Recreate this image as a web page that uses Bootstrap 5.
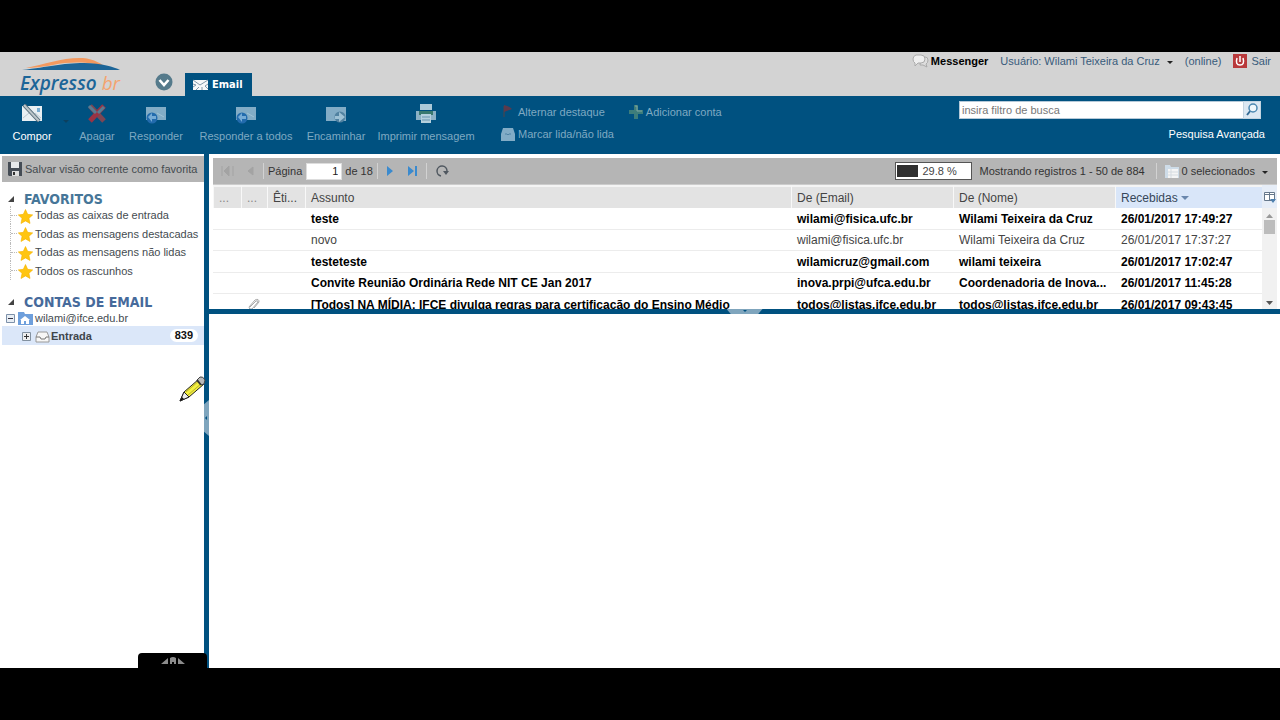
<!DOCTYPE html>
<html lang="pt-BR">
<head>
<meta charset="utf-8">
<meta name="viewport" content="width=device-width, initial-scale=1">
<title>Expresso br - Email</title>
<link href="https://cdn.jsdelivr.net/npm/bootstrap@5.3.0/dist/css/bootstrap.min.css" rel="stylesheet">
<style>
  :root { --navy: #005180; --ink: #444b50; --soft: #7fa9c2; }
  body { background: #000; font: 11px/16px "Liberation Sans", Arial, sans-serif; color: var(--ink); }
  button, .linkish { background: none; border: 0; padding: 0; color: inherit; font: inherit; text-decoration: none; }
  svg { display: block; flex: none; }
  .frame { height: 100vh; padding: 52px 0; }
  .app { background: #fff; }

  .masthead { background: #d3d3d3; height: 44px; }
  .brand { width: 102px; margin-left: 20px; color: #1c6598; font: italic 600 19px/24px "Open Sans", sans-serif; white-space: nowrap; padding-top: 5px; }
  .brand svg { margin-left: 2px; }
  .brand em { color: #f3a46f; font-weight: 400; }
  .tab-more { margin: 21px 12px 0 33px; align-self: flex-start; }
  .tab-mail { background: var(--navy); color: #fff; height: 23px; width: 67px; padding-left: 8px; font: bold 11px/16px "DejaVu Sans Condensed", sans-serif; }
  .session { color: #385b7b; height: 18px; padding-right: 9px; gap: 12px; }
  .caret-s { width: 0; height: 0; border: 3px solid transparent; border-top-color: #222; border-bottom: 0; display: inline-block; vertical-align: middle; }

  .actions { background: var(--navy); color: var(--soft); height: 58px; padding: 8px 15px 0 12px; gap: 12px; }
  .act { display: flex; flex-direction: column; align-items: center; gap: 4px; white-space: nowrap; }
  .act svg { height: 20px; }
  .w-xs { width: 36px; } .w-sm { width: 40px; } .w-md { width: 58px; } .w-lg { width: 98px; }
  .more { width: 3px; height: 34px; opacity: .35; }
  .minis { gap: 6px; padding-left: 14px; }
  .minis button { display: flex; align-items: center; gap: 3px; white-space: nowrap; }
  .mini-row { gap: 24px; }
  .search { width: 302px; height: 18px; margin-top: -3px; }
  .search input { border: 1px solid #b5c9d8; border-right: 0; min-width: 0; padding: 0 2px; font: inherit; background: #fff; color: #666; }
  .search input::placeholder { color: #777; }
  .search button { width: 18px; background: #dce8f2; border: 1px solid #c3d4e0; }
  .advanced { margin-top: 7px; }

  .side { width: 204px; flex: none; overflow: hidden; padding-top: 2px; }
  .save { background: #b5b5b5; margin-left: 2px; height: 26px; padding-left: 6px; white-space: nowrap; width: 202px; overflow: hidden; }
  .side h2 { font: bold 14px/18px "DejaVu Sans Condensed", sans-serif; color: #467698; margin: 0; padding-left: 8px; display: flex; align-items: center; gap: 10px; white-space: nowrap; }
  .side h2.acc { color: #466a9b; margin-top: 14px; line-height: 16px; }
  .tri { width: 0; height: 0; border-left: 6px solid transparent; border-bottom: 6px solid #444; }
  .favs { margin: -2px 0 0 10px; padding: 0; list-style: none; }
  .favs li { border-left: 1px dotted #bbb; white-space: nowrap; height: 18px; display: flex; align-items: center; }
  .favs li::before { content: ""; width: 6px; border-top: 1px dotted #bbb; margin-right: 1px; }
  .favs svg { margin: 2px 2px 0 0; }
  .favs li:nth-child(even) { height: 19px; }
  .inbox { background: #dbe7f9; margin-left: 2px; height: 19px; padding: 0 6px 0 19px; font-weight: bold; color: #3e454c; }
  .count { background: #fff; color: #111; border-radius: 8px; padding: 0 5px; line-height: 13px; }
  .vsplit { width: 5px; flex: none; background: var(--navy); padding-top: 246px; }
  .grip-v { background: #7fa5bd; width: 5px; height: 36px; clip-path: polygon(100% 0, 100% 100%, 0 88%, 0 12%); padding: 16px 1px; }
  .grip-v i { display: block; width: 0; border: 2px solid transparent; border-right-color: var(--navy); border-left: 0; }

  .grid-pane { height: 155px; padding: 4px 3px 0 4px; overflow: hidden; }
  .pager { background: #b5b5b5; height: 27px; padding: 0 9px 0 8px; color: #333; white-space: nowrap; border-bottom: 1px solid #ccc; }
  .pager input { width: 36px; height: 17px; border: 1px solid #ddd; text-align: right; padding: 0 3px; font: inherit; color: #222; margin: 0 3px 0 4px; }
  .rule { width: 1px; height: 16px; background: #d2d2d2; }
  .quota { width: 77px; height: 18px; background: #fff; border: 1px solid #555; padding: 1px; line-height: 14px; color: #444; margin-right: 8px; }
  .quota i { width: 30%; background: #2f2f2f; height: 12px; }
  .shown { min-width: 172px; }
  .mails { table-layout: fixed; width: 100%; border-collapse: separate; border-spacing: 0; color: #000; font-size: 12px; }
  .mails th { font-weight: 400; color: #444; background: #e3e3e3; height: 23px; padding: 0 5px; border-left: 1px solid #f8f8f8; border-top: 2px solid #f4f4f4; }
  .mails th.dim { color: #888; }
  .mails td { padding: 0 6px; }
  .mails th, .mails td { overflow: hidden; text-overflow: ellipsis; white-space: nowrap; }
  .mails th.sorted { background: #d9e6f9; color: #37475a; }
  .mails .caret-s { border-width: 4px 4px 0; border-top-color: #6a87ad; }
  .mails td { height: 22px; border-bottom: 1px solid #ececec; font-weight: bold; }
  .mails tbody tr:nth-child(even) td { height: 21px; }
  .mails tr.seen td { font-weight: 400; color: #444; }
  .c-flag { width: 28px; } .c-clip { width: 26px; } .c-tag { width: 38px; } .c-who { width: 162px; } .c-date { width: 147px; }
  .rail { width: 15px; flex: none; }
  .cols { height: 23px; background: #e6edf7; }
  .bar { background: #f1f1f1; padding: 6px 2px 3px; }
  .bar b { width: 11px; height: 14px; background: #bcbcbc; margin-bottom: auto; margin-top: 2px; }
  .hsplit { height: 5px; background: var(--navy); }
  .grip-h { background: #7fa5bd; width: 36px; height: 5px; clip-path: polygon(0 0, 100% 0, 88% 100%, 12% 100%); padding-top: 1px; }
  .grip-h i { display: block; width: 4px; margin: auto; border: 2px solid transparent; border-top-color: var(--navy); border-bottom: 0; }
  .dock { position: absolute; left: 138px; bottom: 0; width: 69px; height: 15px; background: #000; border-radius: 4px 4px 0 0; }
  .pencil { position: absolute; left: 179px; top: 323px; }
</style>
</head>
<body>
<svg width="0" height="0" class="position-absolute" aria-hidden="true">
  <symbol id="star" viewBox="0 0 14 14"><path d="M7 .5 9 5l4.700.500-3.500 3.200 1 4.800L7 11.100l-4.200 2.400 1-4.800L.300 5.500 5 5z" fill="#ffc511" stroke="#f5b400" stroke-width=".6"/></symbol>
</svg>
<div class="frame">
<div class="app h-100 d-flex flex-column position-relative overflow-hidden">

  <header class="masthead d-flex">
    <div class="brand">
      <svg width="98" height="14" viewBox="0 0 98 14"><path d="M4 11C23 7 42 0 61 1c11 1 19 6 24 10C72 5 51 4 31 8 20 10 12 11 4 11z" fill="#f3995f"/><path d="M0 13c27-3 39-7 62-7 18 0 30 4 36 7z" fill="#1c6598"/></svg>
      <div>Expresso <em>br</em></div>
    </div>
    <button class="tab-more" aria-label="Mais"><svg width="18" height="18" viewBox="0 0 18 18"><circle cx="9" cy="9" r="8.500" fill="#557a8b"/><path d="m4.500 7 4.500 5 4.500-5" fill="none" stroke="#fff" stroke-width="2.600"/></svg></button>
    <button class="tab-mail align-self-end d-flex align-items-center gap-1"><svg width="15" height="11" viewBox="0 0 15 11"><path d="M0 1h15v10H0z" fill="#f5f7f8"/><path d="m0 1 7 5 8-5M0 5l3 1-3 2M3 11l3-3M15 5l-3 2 3 3M9 11V8" fill="none" stroke="#8097a8"/></svg>Email</button>
    <div class="session ms-auto d-flex align-items-center">
      <button class="d-flex align-items-center fw-bold text-black"><svg width="19" height="14" viewBox="0 0 19 14"><path d="M9 3h4q3 0 3 3t-2 4l1 3-4-2H8z" fill="#ddd" stroke="#aaa"/><path d="M4 1h5q4 0 4 4T9 9H6l-3 3V9Q1 8 1 5t3-4z" fill="#eee" stroke="#aaa"/></svg>Messenger</button>
      <button>Usuário: Wilami Teixeira da Cruz <span class="caret-s ms-1"></span></button>
      <span>(online)</span>
      <a href="#" class="linkish d-flex align-items-center gap-1"><svg width="14" height="14" viewBox="1 0 14 14"><path d="M1 0h14v14H1z" fill="#b9393b"/><path d="M5 4Q3 11 8 11t3-7M8 2v6" fill="none" stroke="#fff" stroke-width="1.500"/></svg>Sair</a>
    </div>
  </header>

  <nav class="actions d-flex align-items-start">
    <button class="act w-sm text-white"><svg width="24" viewBox="0 0 24 20"><path d="M2 2h20v15H2z" fill="#e9f0f3"/><path d="m3 14 6-5m6 0 6 5" stroke="#bccad2"/><path d="M17 4h3v4h-3z" fill="#7aaed2"/><path d="m4 1 15 16" stroke="#526b78" stroke-width="4"/><path d="m4 1 15 16" stroke="#bcc5c9" stroke-width="2"/></svg>Compor</button>
    <span class="more d-flex align-items-center justify-content-center"><span class="caret-s flex-shrink-0"></span></span>
    <button class="act w-xs"><svg width="20" viewBox="0 0 20 20"><path d="m3 2 14 15" stroke="#7d4654" stroke-width="5"/><path d="M17 2 3 17" stroke="#993344" stroke-width="5"/><path d="m2 2 7 7m8-6-6 6" stroke="#597b91" stroke-width="3"/></svg>Apagar</button>
    <button class="act w-md"><svg width="22" viewBox="0 0 22 20"><path d="M1 3h20v13H1z" fill="#82acc6"/><path d="m12 9 7 4" stroke="#a0c3d6"/><circle cx="7" cy="14" r="5.500" fill="#226bad"/><path d="M3 13 7 9v3h4v3H7v3z" fill="#75abd6"/></svg>Responder</button>
    <button class="act w-lg"><svg width="22" viewBox="0 0 22 20"><path d="M1 3h20v13H1z" fill="#82acc6"/><path d="m12 9 7 4" stroke="#a0c3d6"/><circle cx="7" cy="14" r="5.500" fill="#226bad"/><path d="M3 13 7 9v3h4v3H7v3z" fill="#75abd6"/></svg>Responder a todos</button>
    <button class="act w-md"><svg width="22" viewBox="0 0 22 20"><path d="M1 3h20v14H1z" fill="#82acc6"/><circle cx="15" cy="13" r="5.500" fill="#5182a1"/><path d="M10 12h4V8l6 5-6 5v-3h-4z" fill="#9dc1d5"/></svg>Encaminhar</button>
    <button class="act w-lg"><svg width="22" viewBox="0 0 22 20"><path d="M5 0h12v6H5z" fill="#abc9d8"/><path d="M1 7h20v9H1z" fill="#8bb1c6"/><path d="M4 7h14v4H4z" fill="#39796f"/><path d="M6 10h10v9H6z" fill="#b5d0dd"/><path d="M7 13h8m-8 3h8" stroke="#6895af"/></svg>Imprimir mensagem</button>
    <div class="minis d-flex flex-column">
      <div class="mini-row d-flex">
        <button><svg width="14" height="14" viewBox="0 0 14 14"><path d="M3 1v11" stroke="#37485a" stroke-width="1.500"/><path d="M3 0q5 1 8 4-3 1-8 3z" fill="#5c3a4c"/></svg>Alternar destaque</button>
        <button><svg width="14" height="14" viewBox="1 0 14 14"><path d="M6 0h4v5h5v4h-5v5H6V9H1V5h5z" fill="#3d7d7b"/><path d="M7 1h2v5h5" stroke="#80a7a0" fill="none"/></svg>Adicionar conta</button>
      </div>
      <button><svg width="14" height="14" viewBox="1 0 14 14"><path d="M3 1h10l2 6v7H1V7z" fill="#82acc6"/><path d="M5 7h2l1 1 1-1h2" fill="none" stroke="#4f83a5"/></svg>Marcar lida/não lida</button>
    </div>
    <div class="ms-auto d-flex flex-column align-items-end">
      <form class="search d-flex me-1"><input class="flex-grow-1" type="text" aria-label="Filtro de busca" placeholder="insira filtro de busca"><button type="button" aria-label="Buscar"><svg width="16" height="16" viewBox="0 0 16 16"><path d="m3 13 4-5" stroke="#356b94" stroke-width="2"/><circle cx="9" cy="6" r="4" fill="#eff7fb" stroke="#4b88b1" stroke-width="1.500"/></svg></button></form>
      <button class="advanced text-white">Pesquisa Avançada</button>
    </div>
  </nav>

  <main class="d-flex flex-grow-1 overflow-hidden">
    <aside class="side">
      <button class="save d-flex align-items-center"><svg width="17" height="14" viewBox="0 0 17 14"><path d="M0 0h14v14H1l-1-1z" fill="#454c55"/><path d="M3 0h8v6H3z" fill="#e7e9eb"/><path d="M4 9h7v5H4z" fill="#ddd"/><path d="M5 10h2v3H5z" fill="#333"/></svg>Salvar visão corrente como favorita</button>
      <h2 class="mt-2"><span class="tri"></span>FAVORITOS</h2>
      <ul class="favs">
        <li><svg width="15" height="15"><use href="#star"/></svg>Todas as caixas de entrada</li>
        <li><svg width="15" height="15"><use href="#star"/></svg>Todas as mensagens destacadas</li>
        <li><svg width="15" height="15"><use href="#star"/></svg>Todas as mensagens não lidas</li>
        <li><svg width="15" height="15"><use href="#star"/></svg>Todos os rascunhos</li>
      </ul>
      <h2 class="acc"><span class="tri"></span>CONTAS DE EMAIL</h2>
      <div class="d-flex align-items-center ps-1"><svg width="31" height="16" viewBox="0 0 31 16"><path d="M2.500 4.500h8v8h-8z" fill="#e8eef4" stroke="#7d91aa"/><path d="M4 8.500h5" stroke="#334"/><path d="M14 2h6l1 2h8v11H14z" fill="#6e9fdc"/><path d="m21 6-5 4h1v4h3v-3h2v3h3v-4h1z" fill="#fff"/></svg>wilami@ifce.edu.br</div>
      <div class="inbox d-flex align-items-center"><svg width="30" height="16" viewBox="0 0 30 16"><path d="M1.500 4.500h8v8h-8z" fill="#eee" stroke="#8291a0"/><path d="M3 8.500h5M5.500 6v5" stroke="#333"/><path d="m17 4-2 5v5h13V9l-2-5z" fill="#f7f7f7" stroke="#999"/><path d="M15 9h4l1 2h4l1-2h3" fill="none" stroke="#777"/></svg>Entrada<span class="count ms-auto">839</span></div>
    </aside>
    <div class="vsplit"><div class="grip-v"><i></i></div></div>

    <section class="flex-grow-1 d-flex flex-column overflow-hidden">
      <div class="grid-pane">
        <div class="pager d-flex align-items-center">
          <svg width="34" height="12" viewBox="0 0 34 12"><path d="M1 1v10M8 1 3 6l5 5zM12 1v10M32 2l-5 4 5 4z" fill="#a3a3a3" stroke="#a3a3a3"/></svg>
          <span class="rule mx-1 ms-2"></span><label for="pg">Página</label><input id="pg" type="text" value="1"><span>de 18</span>
          <span class="rule ms-1 me-2"></span><svg width="32" height="12" viewBox="0 0 32 12"><path d="m1 1 6 5-6 5zM22 1l6 5-6 5z" fill="#3a8ace"/><path d="M30 1v10" stroke="#3a8ace" stroke-width="2"/></svg>
          <span class="rule mx-2"></span><svg width="14" height="14" viewBox="0 0 14 14"><path d="M6 12A5 5 0 1 1 12 7" fill="none" stroke="#505860" stroke-width="1.500"/><path d="M8 7h6l-3 4z" fill="#505860"/></svg>
          <div class="quota d-flex align-items-center ms-auto"><i></i><span class="ps-1">29.8 %</span></div>
          <span class="shown">Mostrando registros 1 - 50 de 884</span><span class="rule ms-1 me-2"></span>
          <svg width="17" height="14" viewBox="0 0 17 14"><path d="M0 1h5l1 2h8v11H0z" fill="#cedce8"/><path d="M3 5h10v9H3z" fill="#f5f5f5"/><path d="M3 8h10M3 11h10M6 5v9" stroke="#d5dbe0"/></svg>
          <button>0 selecionados <span class="caret-s ms-1"></span></button>
        </div>
        <div class="d-flex">
          <table class="mails flex-grow-1">
            <colgroup><col class="c-flag"><col class="c-clip"><col class="c-tag"><col><col class="c-who"><col class="c-who"><col class="c-date"></colgroup>
            <thead><tr><th class="dim">...</th><th class="dim">...</th><th>Êti...</th><th>Assunto</th><th>De (Email)</th><th>De (Nome)</th><th class="sorted">Recebidas <span class="caret-s"></span></th></tr></thead>
            <tbody>
              <tr><td></td><td></td><td></td><td>teste</td><td>wilami@fisica.ufc.br</td><td>Wilami Teixeira da Cruz</td><td>26/01/2017 17:49:27</td></tr>
              <tr class="seen"><td></td><td></td><td></td><td>novo</td><td>wilami@fisica.ufc.br</td><td>Wilami Teixeira da Cruz</td><td>26/01/2017 17:37:27</td></tr>
              <tr><td></td><td></td><td></td><td>testeteste</td><td>wilamicruz@gmail.com</td><td>wilami teixeira</td><td>26/01/2017 17:02:47</td></tr>
              <tr><td></td><td></td><td></td><td>Convite Reunião Ordinária Rede NIT CE Jan 2017</td><td>inova.prpi@ufca.edu.br</td><td>Coordenadoria de Inova...</td><td>26/01/2017 11:45:28</td></tr>
              <tr><td></td><td><svg width="13" height="13" viewBox="0 0 13 13"><path d="m3 9 6-6q2-1 2 1l-6 7q-3 1-3-2l6-7q4-2 4 2l-5 6" fill="none" stroke="#aaa"/></svg></td><td></td><td>[Todos] NA MÍDIA: IFCE divulga regras para certificação do Ensino Médio</td><td>todos@listas.ifce.edu.br</td><td>todos@listas.ifce.edu.br</td><td>26/01/2017 09:43:45</td></tr>
            </tbody>
          </table>
          <div class="rail d-flex flex-column">
            <button class="cols" aria-label="Colunas"><svg width="15" height="14" viewBox="0 0 15 14"><path d="M2.500 2.500h10v8h-10zM2 4.500h11M7.500 2v8" fill="#fff" stroke="#66788c"/><path d="M8 9h6l-3 4z" fill="#4d7fae"/></svg></button>
            <div class="bar flex-grow-1 d-flex flex-column align-items-center"><svg width="7" height="4" viewBox="0 0 7 4"><path d="M0 4 3.500 0 7 4z" fill="#999"/></svg><b></b><svg class="mb-2" width="7" height="4" viewBox="0 0 7 4"><path d="M0 0h7L3.500 4z" fill="#555"/></svg></div>
          </div>
        </div>
      </div>
      <div class="hsplit d-flex justify-content-center"><div class="grip-h"><i></i></div></div>
      <article class="flex-grow-1"></article>
    </section>
  </main>

  <svg class="pencil" width="27" height="28" viewBox="0 0 27 28"><path d="m1 26 4-9L20 4l5 5L10 22z" fill="#f4f13f" stroke="#222"/><path d="m1 26 4-9 5 5z" fill="#eee" stroke="#222"/><path d="m1 26 2-4 2 2z" fill="#111"/><path d="m7 17 14-12M9 20 23 8" stroke="#b9b12f"/><path d="m18 5 3-3q3-1 5 3l-1 4-3 1z" fill="#bbb" stroke="#444"/><path d="m18 5 4 5" stroke="#333" stroke-width="2"/></svg>
  <div class="dock d-flex justify-content-center pt-1"><svg width="24" height="7" viewBox="0 0 24 7"><path d="m0 7 7-6v6zM24 7l-7-6v6zM9 7V1q3-2 6 0v6h-2V5h-2v2z" fill="#8c8c8c"/></svg></div>
</div>
</div>
<script src="https://cdn.jsdelivr.net/npm/bootstrap@5.3.0/dist/js/bootstrap.bundle.min.js"></script>
</body>
</html>
